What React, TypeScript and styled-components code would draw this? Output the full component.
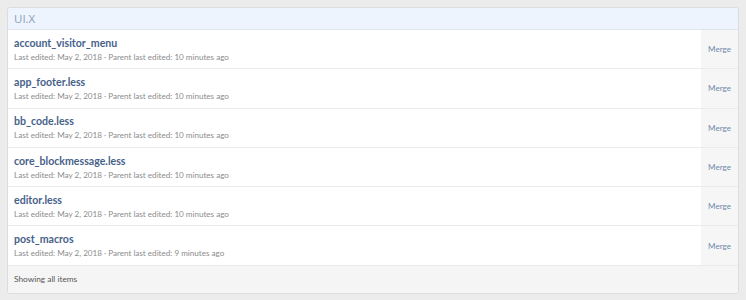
import React from "react";
import styled, { createGlobalStyle } from "styled-components";

const GlobalStyle = createGlobalStyle`
  html, body {
    margin: 0;
    padding: 0;
    background: #ececec;
    font-family: "Lato", "Open Sans", "Liberation Sans", sans-serif;
  }
`;

const Page = styled.div`
  padding: 7px 7px 0 7px;
  width: 746px;
  height: 300px;
  box-sizing: border-box;
`;

const Block = styled.div`
  background: #fff;
  border: 1px solid #dcdcdc;
  border-radius: 3px;
  overflow: hidden;
`;

const Header = styled.div`
  background: #edf4fd;
  color: #8ba0bb;
  font-family: "Open Sans", sans-serif;
  font-size: 11.5px;
  height: 21px;
  line-height: 21px;
  padding: 0 6px;
  border-bottom: 1px solid #dfe6ee;
`;

const Row = styled.div`
  display: flex;
  height: 38.3px;
  border-bottom: 1px solid #ebebeb;
`;

const Main = styled.div`
  flex: 1;
  display: flex;
  flex-direction: column;
  justify-content: center;
  padding: 0 6px;
  gap: 2px;
`;

const Title = styled.div`
  color: #47628a;
  font-weight: 700;
  font-size: 10.6px;
  line-height: 13px;
`;

const Meta = styled.div`
  color: #8c8c8c;
  font-size: 8.1px;
  line-height: 10px;
`;

const MergeCell = styled.div`
  width: 37px;
  background: #f6f6f6;
  color: #7189aa;
  font-size: 8.1px;
  display: flex;
  align-items: center;
  justify-content: center;
`;

const Footer = styled.div`
  background: #f5f5f5;
  color: #555;
  font-size: 8.3px;
  height: 27px;
  line-height: 27px;
  padding: 0 6px;
`;

interface Template {
  name: string;
  parentEdited: string;
}

const templates: Template[] = [
  { name: "account_visitor_menu", parentEdited: "10 minutes ago" },
  { name: "app_footer.less", parentEdited: "10 minutes ago" },
  { name: "bb_code.less", parentEdited: "10 minutes ago" },
  { name: "core_blockmessage.less", parentEdited: "10 minutes ago" },
  { name: "editor.less", parentEdited: "10 minutes ago" },
  { name: "post_macros", parentEdited: "9 minutes ago" },
];

export default function App() {
  return (
    <>
      <GlobalStyle />
      <Page>
        <Block>
          <Header>UI.X</Header>
          {templates.map((t) => (
            <Row key={t.name}>
              <Main>
                <Title>{t.name}</Title>
                <Meta>
                  Last edited: May 2, 2018 · Parent last edited: {t.parentEdited}
                </Meta>
              </Main>
              <MergeCell>Merge</MergeCell>
            </Row>
          ))}
          <Footer>Showing all items</Footer>
        </Block>
      </Page>
    </>
  );
}
